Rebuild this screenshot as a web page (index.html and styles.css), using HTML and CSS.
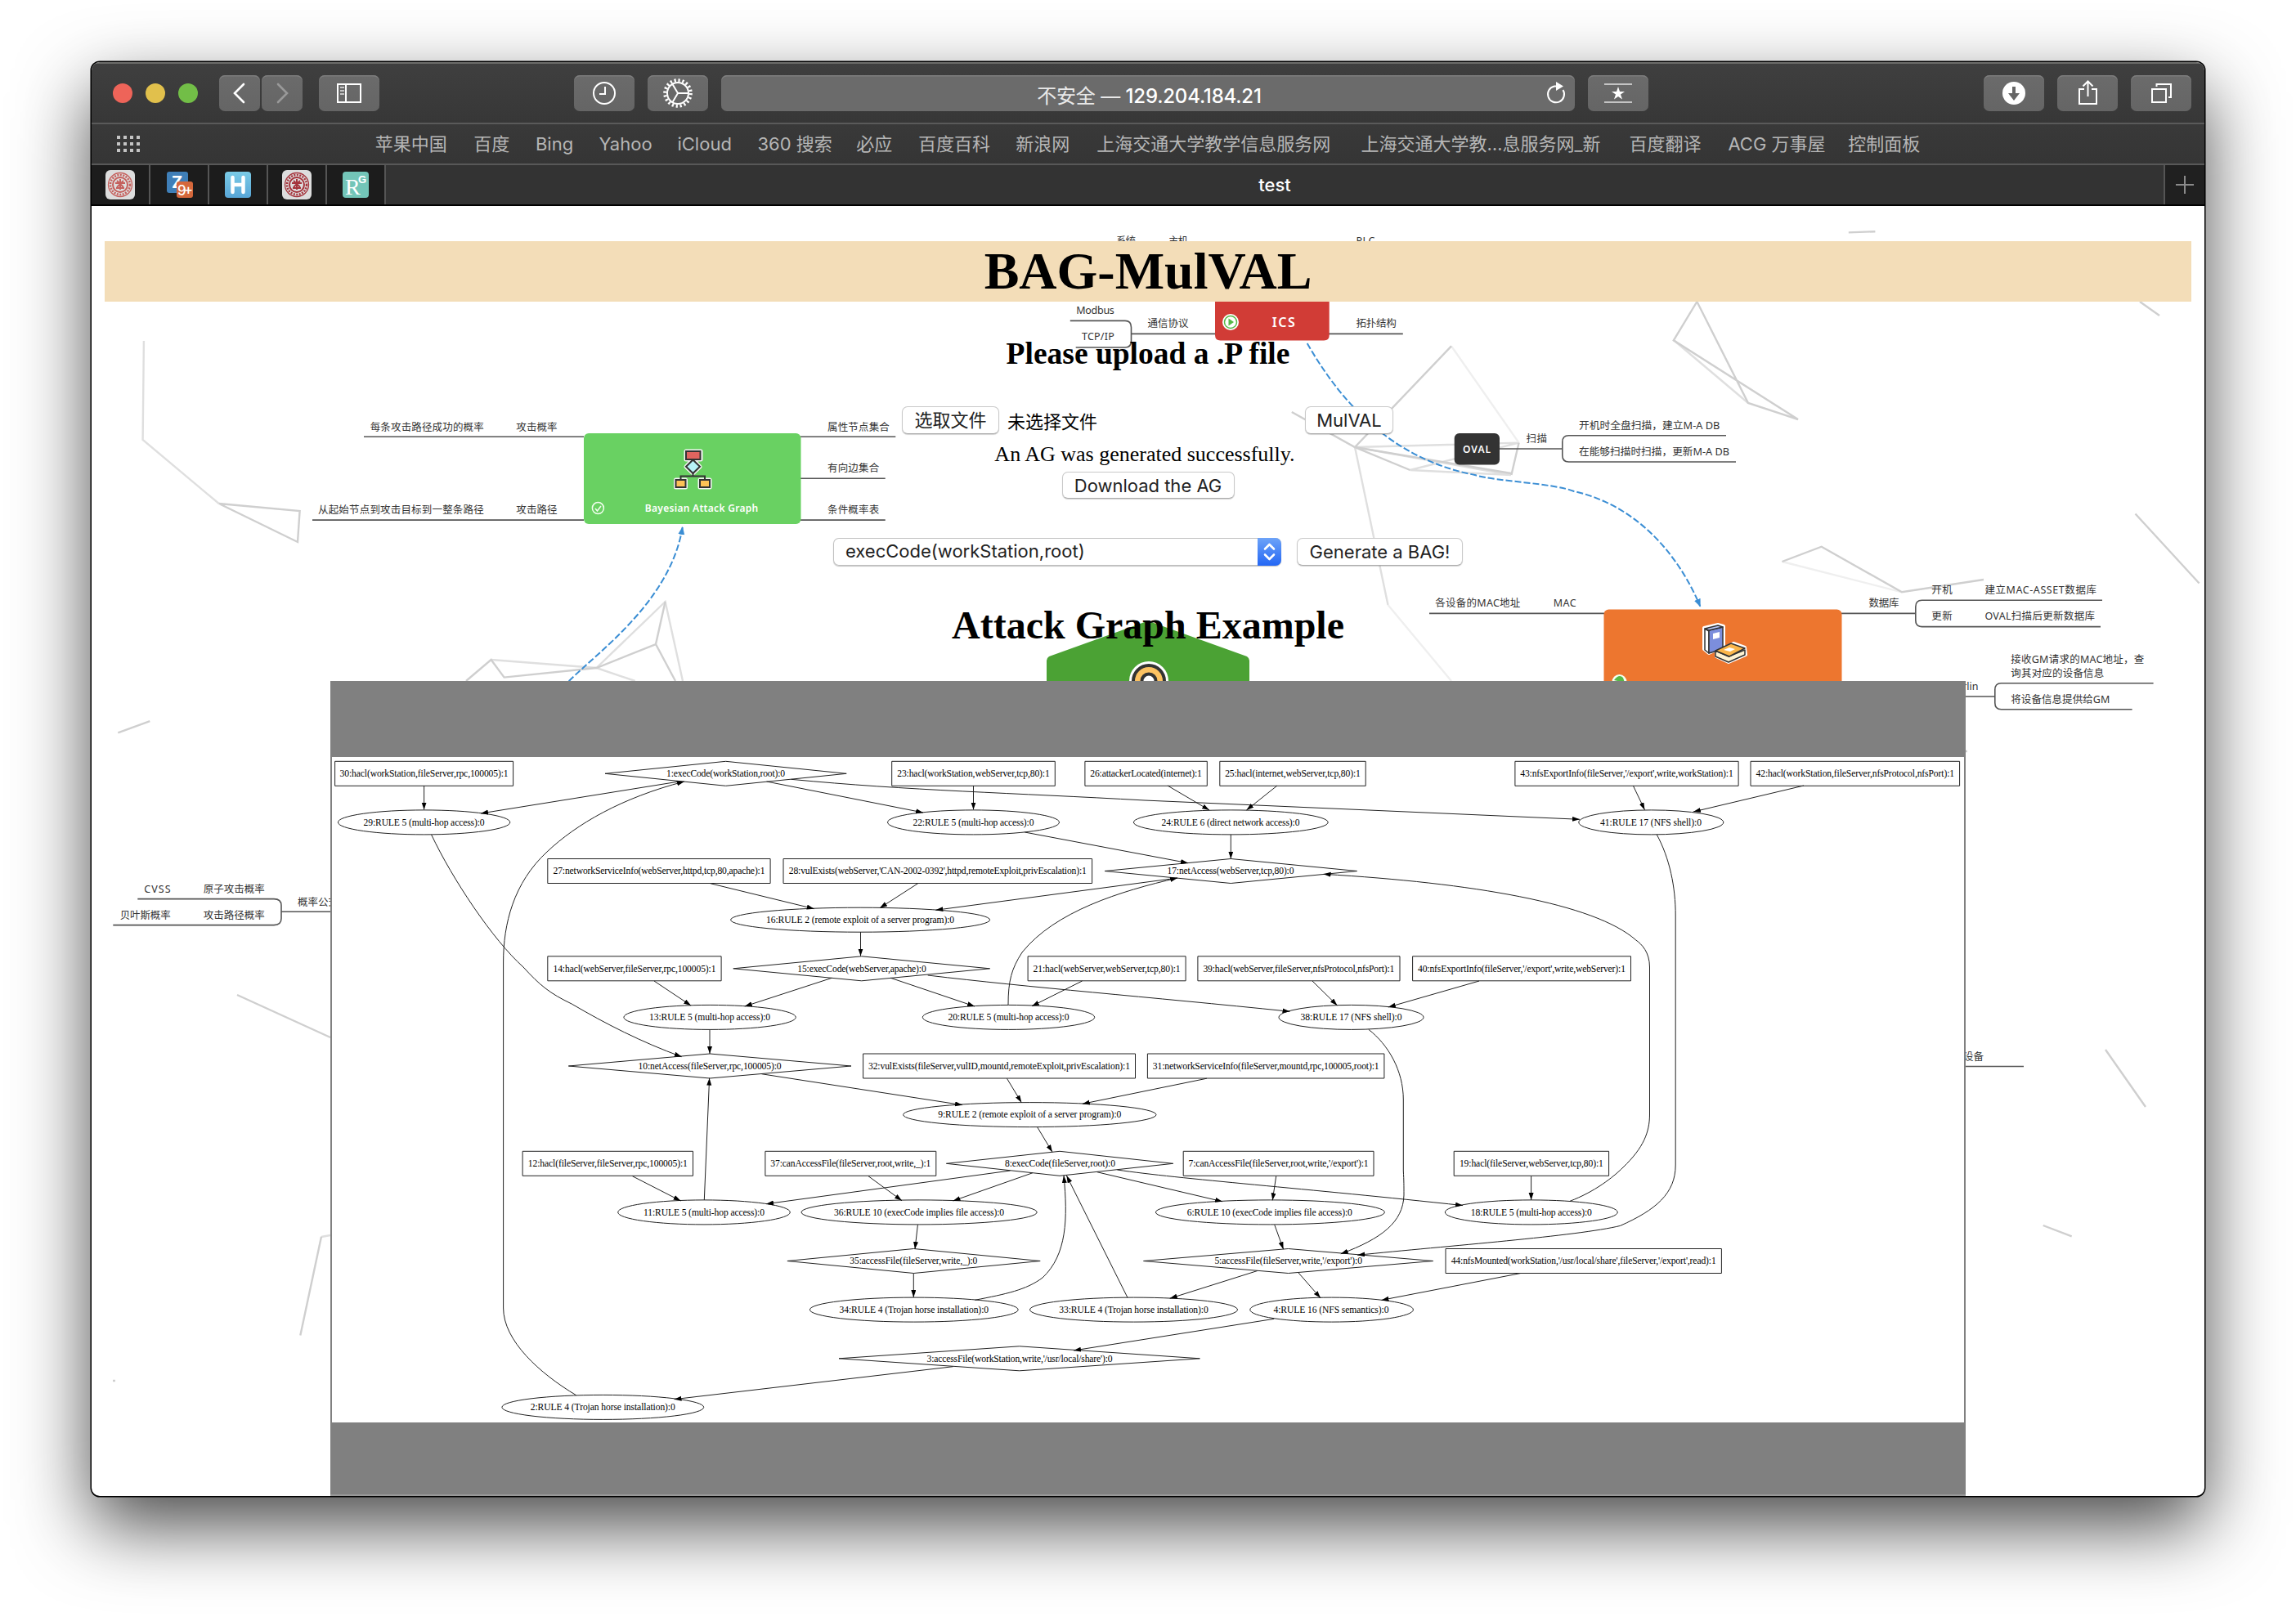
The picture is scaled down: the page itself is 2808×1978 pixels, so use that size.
FILE: index.html
```html
<!DOCTYPE html>
<html lang="zh-CN">
<head>
<meta charset="utf-8">
<title>test</title>
<link rel="stylesheet" href="styles.css">
</head>
<body>
<div class="window">
  <header class="toolbar">
    <div class="lights"><i class="light red"></i><i class="light yellow"></i><i class="light green"></i></div>
    <div class="nav">
      <button class="tool half"><svg width="50" height="44" viewBox="0 0 50 44"><path class="stroke thick" d="M30 11 19 22l11 11"/></svg></button>
      <button class="tool half"><svg width="50" height="44" viewBox="0 0 50 44"><path class="stroke thick dim" d="M20 11l11 11-11 11"/></svg></button>
    </div>
    <button class="tool sidebar"><svg width="74" height="44" viewBox="0 0 74 44"><path class="stroke" d="M23 11h28v22H23zM33 11v22"/><path class="stroke soft" d="M26 15h5M26 19h5M26 23h5"/></svg></button>
    <button class="tool history"><svg width="74" height="44" viewBox="0 0 74 44"><circle class="stroke" cx="37" cy="22" r="13"/><path class="stroke" d="M38 14v9h-7"/></svg></button>
    <button class="tool gear"><svg width="74" height="44" viewBox="0 0 74 44"><circle class="stroke teeth" cx="37" cy="22" r="15.8"/><circle class="stroke" cx="37" cy="22" r="13"/><path class="stroke" d="M37 22h13M37 22l-6.500-11M37 22l-6.500 11"/></svg></button>
    <div class="address"><span class="host">不安全 — <b>129.204.184.21</b></span><svg class="reload" width="30" height="34" viewBox="0 0 30 34"><path class="stroke" d="M23.500 13A10 10 0 1 1 13 8.500h4"/><path class="fill" d="M15 3l9 5.500-9 5.500z"/></svg></div>
    <button class="tool star"><svg width="74" height="44" viewBox="0 0 74 44"><path class="stroke soft" d="M20 11h34M20 33h34"/><path class="fill" d="M37 14l2 6h6l-5 3.500 2 6-5-3.500-5 3.500 2-6-5-3.500h6z"/></svg></button>
    <button class="tool download"><svg width="74" height="44" viewBox="0 0 74 44"><circle class="fill" cx="37" cy="22" r="14"/><path class="arrow" d="M35 14h4v8h5l-7 9-7-9h5z"/></svg></button>
    <button class="tool share"><svg width="74" height="44" viewBox="0 0 74 44"><path class="stroke" d="M33 17h-6v18h21V17h-6M37.500 26V8M31.500 13.500l6-6 6 6"/></svg></button>
    <button class="tool tabsview"><svg width="74" height="44" viewBox="0 0 74 44"><path class="stroke" d="M26 17h17v16H26zM31.500 14v-3H49v16h-3"/></svg></button>
  </header>
  <nav class="favorites">
    <svg class="grid" width="28" height="20" viewBox="0 0 28 20"><path d="M0 2h28M0 10h28M0 18h28"/></svg>
    <div class="links"><span>苹果中国</span><span>百度</span><span>Bing</span><span>Yahoo</span><span>iCloud</span><span>360 搜索</span><span>必应</span><span>百度百科</span><span>新浪网</span><span>上海交通大学教学信息服务网</span><span>上海交通大学教…息服务网_新</span><span>百度翻译</span><span>ACG 万事屋</span><span>控制面板</span></div>
  </nav>
  <div class="tabs">
    <div class="pin"><svg width="36" height="36" viewBox="0 0 36 36"><rect width="36" height="36" rx="6" fill="#ddd"/><g fill="none" stroke="#c5605d"><circle cx="18" cy="18" r="14.500" stroke-width="1.300"/><circle cx="18" cy="18" r="12" stroke-width="2.500" stroke-dasharray="2 1.500"/><circle cx="18" cy="18" r="9" stroke-width="2"/><path stroke-width="2" d="M12 16h12M18 11v13M13 22h10M14 13l8 8M22 13l-8 8"/></g></svg></div>
    <div class="pin"><svg width="36" height="36" viewBox="0 0 36 36"><rect x="3" y="2" width="26" height="26" rx="3" fill="#3f7fb8"/><text class="zed" x="9" y="22">Z</text><rect x="15" y="14" width="20" height="20" rx="3" fill="#d5673b"/><text class="nine" x="16" y="31" textLength="19">9+</text></svg></div>
    <div class="pin"><svg width="36" height="36" viewBox="0 0 36 36"><defs><linearGradient id="sky" x2="0" y2="1"><stop stop-color="#7bcbe6"/><stop offset="1" stop-color="#58a6d8"/></linearGradient></defs><rect x="2" y="2" width="32" height="32" rx="4" fill="url(#sky)"/><path d="M11.500 9v18M24.500 9v18M12 18h12" stroke="#fff" stroke-width="4.500" stroke-linecap="round"/></svg></div>
    <div class="pin"><svg width="36" height="36" viewBox="0 0 36 36"><rect width="36" height="36" rx="6" fill="#ddd"/><g fill="none" stroke="#a5343c"><circle cx="18" cy="18" r="14.500" stroke-width="1.300"/><circle cx="18" cy="18" r="12" stroke-width="2.500" stroke-dasharray="2 1.500"/><circle cx="18" cy="18" r="9" stroke-width="2"/><path stroke-width="2" d="M12 16h12M18 11v13M13 22h10M14 13l8 8M22 13l-8 8"/></g></svg></div>
    <div class="pin"><svg width="36" height="36" viewBox="0 0 36 36"><rect x="2" y="2" width="32" height="32" rx="4" fill="#73c5b8"/><text class="rr" x="5" y="30">R</text><text class="rg" x="21" y="16">G</text></svg></div>
    <div class="tab">test</div>
    <div class="plus"><svg width="22" height="22" viewBox="0 0 22 22"><path d="M0 11h22M11 0v22"/></svg></div>
  </div>

  <main class="page">
    <svg class="map" width="2584" height="1578" viewBox="112 252 2584 1578">
      <defs><marker id="tip" markerUnits="userSpaceOnUse" markerWidth="12" markerHeight="10" refX="9" refY="4" orient="auto"><path d="M0 0L10 4L0 8z" fill="#3b8ed4"/></marker></defs>
      <g class="web">
        <path class="faint" d="M175.900 417L174.600 538L267.700 616M729.500 817L813.600 736L835 833M600.600 807L729.500 817L776.700 833M1657 547L1697.500 740M1657 547L1857.600 541.600M1724.500 575L1857.600 541.600M1724.500 575L1848 581M2046.800 416L2138 493M1657 547L1848 581M393 1513L404 1511"/>
        <path class="fainter" d="M1775 423.400L1857.600 541.600M1697.500 740L1775 833M2179.500 687L2326 724.300"/>
        <path d="M267.700 616L366.600 625L364 663L267.700 616M813.600 736L802 788L729.500 817L616.600 828.600L600.600 807L570 833M802 788L826 833M1775 423.400L1657 547L1724.500 575M1579.800 504L1657 547L1848 579M1857.600 541.600L1848.400 581M2075.400 369L2046.800 416.300L2199 513L2138 493L2075.400 369M2617 369L2641 386M2260.800 284.400L2293.400 283.200M2611.500 628.500L2689.600 713.500M2179.500 687L2227.700 668.700L2326 724.300L2426 709M144.300 896.300L183.300 882.200M290 1217L404 1269M393 1512.700L367.300 1633.600M138 1689h3M2575 1284L2624 1354M2498.700 1499L2533.700 1512.400M2400 919h6"/>
      </g>
      <g class="branch">
        <path d="M445 534.300H714M382 636.100H714M979 534.300H1095.300M979 585.200H1082.700M979 636.100H1082.700M1308.800 392.400H1376q7.500 0 7.500 8V417q0 8-7.500 8H1315.700M1383.500 408.400H1486M1625 408.400H1715.800M1834 549H1910.800M2111 532.800H1918.500q-7.700 0-7.700 8V557q0 8 7.700 8H2123M1748 750.400H1962M2252 750.400H2342.800M2571 734.200H2350.500q-7.700 0-7.700 8V758.600q0 8 7.700 8H2569M2404 852H2439.800M2633.600 835.800H2447.500q-7.700 0-7.700 8V859.800q0 8 7.700 8H2607.600M168.300 1099.600H335q9 0 9 8V1123.600q0 8-9 8H138.300M344 1115.300H404M2404 1304.500H2475"/>
      </g>
      <g class="link">
        <path d="M695.700 833.200C732 797 820 735 834.700 645"/>
        <path d="M1598.700 420C1635 483 1695 560 1803.700 581C1830 589 1900 591 1925 601C2010 620 2058 690 2079.300 741.700"/>
      </g>
      <rect x="714" y="530" width="265.500" height="111" rx="6" fill="#69d162"/>
      <path d="M1486 360H1625.700V410q0 6.500-6.500 6.500H1492.500q-6.500 0-6.500-6.500z" fill="#d13c36"/>
      <rect x="1778.700" y="530" width="55.300" height="38.500" rx="6" fill="#333"/>
      <rect x="1961.500" y="745.500" width="291" height="120" rx="6" fill="#ed762f"/>
      <path d="M1280 900V808q0-3 3-5L1397 762q7-4 14 0L1525 803q3 2 3 5V900z" fill="#4ba234"/>
      <g stroke="#f5f5f5" stroke-width="5" stroke-linejoin="round"><path fill="#f5f5f5" d="M839 552h18v10h-18zM847.500 562L856 571L847.500 579L839 571zM826.500 587h12v9h-12zM856 587h12v9h-12z"/></g>
      <g stroke="#333" stroke-width="2"><path fill="none" d="M847.500 562V583M832.500 587V582.500H862V587"/><path fill="#e0645f" d="M839 552h17.500v10H839z"/><path fill="#b8f2f8" d="M847.500 562.500L856 570.700L847.500 579L839 570.700z"/><path fill="#fcc256" d="M826.500 587h12v9h-12zM856 587h12v9h-12z"/></g>
      <g fill="none" stroke="#f2fff0" stroke-width="1.500"><circle cx="731.400" cy="621.600" r="7"/><path d="M728 622l2.500 3 4.500-6"/></g>
      <circle cx="1505" cy="394" r="10" fill="#fff"/><circle cx="1505" cy="394" r="7.500" fill="#fff" stroke="#56b947" stroke-width="1.500"/><path d="M1502.500 389.500l6.500 4.500-6.500 4.500z" fill="#56b947"/>
      <circle cx="1405" cy="833" r="24" fill="#fff"/><circle cx="1405" cy="833" r="19" fill="#fcc262" stroke="#333" stroke-width="4"/><circle cx="1405" cy="833" r="8.500" fill="#fff" stroke="#333" stroke-width="4"/>
      <circle cx="1980.500" cy="834" r="9" fill="#f4fff0"/><path d="M1974 832q6-8 11-3l2 6z" fill="#56b947"/>
      <g stroke-linejoin="round"><path d="M2084 768l17-4 7 2v27l12-6 14 5 1 9-21 9-15-7v-8l-9 4-6-5z" fill="#fff" stroke="#fff" stroke-width="4"/><path d="M2085 769l5 3v27l-5-4z" fill="#fff" stroke="#333" stroke-width="1.500"/><path d="M2090 771l17-4v27l-17 5z" fill="#7c8edc" stroke="#333" stroke-width="1.500"/><path d="M2085 769l16-4 6 2-17 4z" fill="#b9c6f5" stroke="#333" stroke-width="1.500"/><path d="M2095 775l8-2v7l-8 2z" fill="#fff"/><path d="M2098 796v7l16 7 20-9v-6l-20 8z" fill="#fff3d1" stroke="#333" stroke-width="1.500"/><path d="M2098 796l19-9 17 6-19 10z" fill="#fbb64a" stroke="#333" stroke-width="1.500"/><path d="M2108 795l7-3 7 2-6 3z" fill="#fff"/></g>
      <g class="label">
        <text x="452.700" y="526.500" textLength="139">每条攻击路径成功的概率</text><text x="631.300" y="526.500" textLength="50.300">攻击概率</text>
        <text x="389" y="628.300" textLength="202.700">从起始节点到攻击目标到一整条路径</text><text x="631.300" y="628.300" textLength="50.300">攻击路径</text>
        <text x="1012" y="526.500" textLength="75.800">属性节点集合</text><text x="1012" y="577.400" textLength="63.200">有向边集合</text><text x="1012" y="628.300" textLength="63.200">条件概率表</text>
        <text x="1365" y="298.500" textLength="24">系统</text><text x="1429" y="298.500" textLength="24">主机</text><text x="1658.400" y="298.500" textLength="23">PLC</text>
        <text x="1316.300" y="384" textLength="46.500">Modbus</text><text x="1323" y="416" textLength="39.800">TCP/IP</text><text x="1403.600" y="400" textLength="50">通信协议</text><text x="1658.400" y="400" textLength="49.400">拓扑结构</text>
        <text x="1866.600" y="541.200" textLength="25.400">扫描</text><text x="1931" y="525.400" textLength="172.400" lengthAdjust="spacingAndGlyphs">开机时全盘扫描，建立M-A DB</text><text x="1931" y="557.400" textLength="184" lengthAdjust="spacingAndGlyphs">在能够扫描时扫描，更新M-A DB</text>
        <text x="1755.300" y="741.800" textLength="104">各设备的MAC地址</text><text x="1899.700" y="741.800" textLength="28">MAC</text><text x="2285.600" y="741.800" textLength="37">数据库</text>
        <text x="2362.300" y="725.700" textLength="25.400">开机</text><text x="2427.400" y="725.700" textLength="136.600">建立MAC-ASSET数据库</text><text x="2362.300" y="758" textLength="25.400">更新</text><text x="2427.400" y="758" textLength="134.600">OVAL扫描后更新数据库</text>
        <text x="2459.300" y="810.700" textLength="163">接收GM请求的MAC地址，查</text><text x="2459.300" y="828.100" textLength="114">询其对应的设备信息</text><text x="2459.300" y="860.400" textLength="121">将设备信息提供给GM</text><text x="2400" y="844.200" textLength="19.600">rlin</text>
        <text x="176.300" y="1091.600" textLength="32.400">CVSS</text><text x="146.700" y="1124.300" textLength="62">贝叶斯概率</text><text x="248.700" y="1091.600" textLength="75">原子攻击概率</text><text x="248.700" y="1124.300" textLength="75">攻击路径概率</text><text x="364" y="1108" textLength="50">概率公式</text><text x="2401" y="1297" textLength="25">设备</text>
      </g>
      <g class="label light-label"><text x="788.800" y="626.300" textLength="138.400">Bayesian Attack Graph</text><text x="1789" y="553.600" textLength="34">OVAL</text><text class="big" x="1555.700" y="400" textLength="28">ICS</text></g>
    </svg>

    <h1>BAG-MulVAL</h1>
    <h3>Please upload a .P file</h3>
    <form class="upload"><button type="button" class="btn choose">选取文件</button><span class="nofile">未选择文件</span><button type="button" class="btn run">MulVAL</button></form>
    <p class="status">An AG was generated successfully.</p>
    <button type="button" class="btn get">Download the AG</button>
    <div class="generate"><div class="select"><span>execCode(workStation,root)</span><i><svg width="29" height="34" viewBox="0 0 29 34"><path d="M9 13.500l5.500-5.500 5.500 5.500M9 20.500l5.500 5.500 5.500-5.500"/></svg></i></div><button type="button" class="btn bag">Generate a BAG!</button></div>
    <h2>Attack Graph Example</h2>
    <div class="frame">
      <svg class="graph" width="1996" height="814" viewBox="406 926 1996 814">
        <defs><marker id="head" markerUnits="userSpaceOnUse" markerWidth="10" markerHeight="8" refX="9" refY="3" orient="auto"><path d="M0 0L9 3L0 6z"/></marker></defs>
        <g class="shape">
          <path d="M409.600 931.300h218v30h-218zM1090.700 931.300h199.600v30h-199.600zM1326.900 931.300h149.400v30h-149.400zM1491.800 931.300h178.400v30h-178.400zM1852.900 931.300h273.200v30h-273.200zM2141 931.300h255.600v30H2141z"/>
          <path d="M669.800 1050.500h272.300v30H669.800zM958 1050.500h377.600v30H958zM669.800 1169.800h212.300v30H669.800zM1257.100 1169.800h193v30h-193zM1464.900 1169.800h247.100v30h-247.100zM1727.600 1169.800h266.900v30h-266.900z"/>
          <path d="M1055.600 1289h332.900v30h-332.900zM1403.400 1289h289.500v30h-289.500zM639.100 1408.300h208.400v30H639.100zM935.900 1408.300h208.900v30H935.900zM1447.200 1408.300H1680v30h-232.800zM1778.200 1408.300h189.400v30h-189.400zM1768 1527.500h337.400v30H1768z"/>
          <path d="M740 946.300l147.600-15 147.600 15-147.600 15zM1351 1065.500l154.300-15 154.300 15-154.300 15zM896.800 1184.800l156.900-15 156.900 15-156.900 15zM695.300 1304l172.800-15 172.900 15-172.900 15zM1157.400 1423.300l138.600-15 138.700 15-138.700 15zM962.900 1542.500l154.600-15 154.700 15-154.700 15zM1398.500 1542.500l177.100-15 177.100 15-177.100 15zM1026 1661.800l220.700-15 220.700 15-220.700 15z"/>
          <ellipse cx="518.600" cy="1005.900" rx="105.200" ry="15"/><ellipse cx="1190.500" cy="1005.900" rx="105" ry="15"/><ellipse cx="1505.300" cy="1005.900" rx="118.900" ry="15"/><ellipse cx="2019.300" cy="1005.900" rx="88.500" ry="15"/>
          <ellipse cx="1052.100" cy="1125.200" rx="158.500" ry="15"/><ellipse cx="868.100" cy="1244.400" rx="105.200" ry="15"/><ellipse cx="1233.500" cy="1244.400" rx="105.200" ry="15"/><ellipse cx="1652.500" cy="1244.400" rx="88.500" ry="15"/>
          <ellipse cx="1259.300" cy="1363.600" rx="154.700" ry="15"/><ellipse cx="861" cy="1482.900" rx="105.300" ry="15"/><ellipse cx="1124.100" cy="1482.900" rx="144.100" ry="15"/><ellipse cx="1553.400" cy="1482.900" rx="140" ry="15"/><ellipse cx="1872.800" cy="1482.900" rx="105.500" ry="15"/>
          <ellipse cx="1117.800" cy="1602.100" rx="127.400" ry="15"/><ellipse cx="1386.500" cy="1602.100" rx="127" ry="15"/><ellipse cx="1628.600" cy="1602.100" rx="99.800" ry="15"/><ellipse cx="737.300" cy="1721.400" rx="123.400" ry="15"/>
        </g>
        <g class="edge">
          <path d="M518.600 961V990.500"/><path d="M830.500 956L588 995"/><path d="M937.600 956L1129 994"/><path d="M967.600 953.300C1110 967 1240 970 1400 979L1932 1002.300"/>
          <path d="M704.600 1706.700C660 1680 615.600 1640 615.600 1600V1177C615.600 1130 628 1080 669 1042C705 1008 760 976 836.900 956"/>
          <path d="M1190.500 961V990.500"/><path d="M1428 961L1479 991"/><path d="M1562 961L1524.400 991"/><path d="M1997.300 961L2011.500 990.700"/><path d="M2206 961L2071 993"/><path d="M1505.300 1020.700V1050.500"/><path d="M1253.300 1018L1453 1055.700"/>
          <path d="M527.600 1021C553 1075 603 1150 640 1183C660 1205 672 1215 699.700 1228.300C740 1252 785 1275 833.700 1292.700"/>
          <path d="M868.800 1080.700L995.700 1111.700"/><path d="M1122.600 1080.700L1076 1110.700"/><path d="M1440 1074L1144.300 1113.300"/><path d="M1233 1229.300C1233 1200 1237 1185 1250 1165C1290 1115 1370 1090 1440 1074"/>
          <path d="M1052.500 1140V1169.500"/><path d="M1017.300 1196.300L910.800 1231"/><path d="M1089.400 1196.300L1192 1231"/><path d="M1134.700 1193C1260 1208 1400 1219 1577.500 1237.300"/><path d="M800 1200L845 1230"/><path d="M1323.500 1200L1262 1230.700"/><path d="M1605 1200L1635.500 1230"/><path d="M1809 1200L1697.800 1232"/><path d="M868 1259.500V1289"/>
          <path d="M1673.800 1259.300C1698 1278 1716.300 1310 1716.300 1345V1432C1717 1445 1717 1450 1717 1462C1716 1495 1690 1515 1639.800 1533.800"/>
          <path d="M931.300 1313.700L1177 1351.700"/><path d="M1231.500 1319.300L1249.300 1348.700"/><path d="M1475.900 1319.200L1323.900 1350.300"/><path d="M1268.800 1379L1287 1409.300"/><path d="M861.300 1468L867.600 1318.700"/><path d="M773.400 1438.700L832.600 1469"/><path d="M1235.500 1432L937 1472.700"/><path d="M1062 1438.700L1103 1468.700"/><path d="M1263 1434.700L1165.500 1469"/><path d="M1341.700 1433.700L1495 1469.800"/><path d="M1366.400 1431C1440 1442 1600 1454 1789 1474.600"/><path d="M1560.700 1438.700L1556.300 1468.300"/><path d="M1872.600 1438.700V1468"/>
          <path d="M1919.800 1469.400C1950 1458 1973 1440 1985 1428C2010 1404 2017.500 1385 2017.500 1363V1183C2017.500 1165 2008 1155 2000.800 1150C1950 1105 1800 1080 1618.600 1069.300"/>
          <path d="M2026.300 1021C2042 1050 2049.200 1085 2049.200 1120V1425C2049.200 1460 2025 1480 1981.600 1499.400C1930 1512 1770 1524 1660.200 1535.300"/>
          <path d="M1122.400 1498.300L1119 1528"/><path d="M1117.300 1557.700V1587"/><path d="M1192.400 1590.300C1230 1583 1255 1578 1275 1563C1305 1535 1306 1490 1301 1438"/><path d="M1379 1587.300L1304.400 1438"/><path d="M1558.800 1498.300L1569.600 1528.200"/><path d="M1537.800 1554.500L1430.700 1588.300"/><path d="M1588.100 1557L1615 1587.800"/><path d="M1859.800 1557.500L1689.500 1590.400"/><path d="M1558.200 1613.300L1313 1652"/><path d="M1165.500 1671.700L824.500 1711.700"/>
        </g>
        <g class="name">
          <text x="518.600" y="950" textLength="206">30:hacl(workStation,fileServer,rpc,100005):1</text><text x="887.600" y="950" textLength="145">1:execCode(workStation,root):0</text><text x="1190.500" y="950" textLength="186.500">23:hacl(workStation,webServer,tcp,80):1</text><text x="1401.600" y="950" textLength="136.600">26:attackerLocated(internet):1</text><text x="1581" y="950" textLength="165.700">25:hacl(internet,webServer,tcp,80):1</text><text x="1989.500" y="950" textLength="260.500">43:nfsExportInfo(fileServer,'/export',write,workStation):1</text><text x="2268.800" y="950" textLength="242.500">42:hacl(workStation,fileServer,nfsProtocol,nfsPort):1</text>
          <text x="518.600" y="1009.600" textLength="148">29:RULE 5 (multi-hop access):0</text><text x="1190.500" y="1009.600" textLength="148">22:RULE 5 (multi-hop access):0</text><text x="1505" y="1009.600" textLength="169">24:RULE 6 (direct network access):0</text><text x="2019" y="1009.600" textLength="124">41:RULE 17 (NFS shell):0</text>
          <text x="806" y="1069.200" textLength="259">27:networkServiceInfo(webServer,httpd,tcp,80,apache):1</text><text x="1146.800" y="1069.200" textLength="364">28:vulExists(webServer,'CAN-2002-0392',httpd,remoteExploit,privEscalation):1</text><text x="1505" y="1069.200" textLength="155">17:netAccess(webServer,tcp,80):0</text>
          <text x="1052.100" y="1128.900" textLength="230">16:RULE 2 (remote exploit of a server program):0</text>
          <text x="776" y="1188.500" textLength="199">14:hacl(webServer,fileServer,rpc,100005):1</text><text x="1054" y="1188.500" textLength="157.500">15:execCode(webServer,apache):0</text><text x="1353.600" y="1188.500" textLength="180">21:hacl(webServer,webServer,tcp,80):1</text><text x="1588.400" y="1188.500" textLength="234">39:hacl(webServer,fileServer,nfsProtocol,nfsPort):1</text><text x="1861" y="1188.500" textLength="254">40:nfsExportInfo(fileServer,'/export',write,webServer):1</text>
          <text x="868.100" y="1248.100" textLength="148">13:RULE 5 (multi-hop access):0</text><text x="1233.500" y="1248.100" textLength="148">20:RULE 5 (multi-hop access):0</text><text x="1652.500" y="1248.100" textLength="124">38:RULE 17 (NFS shell):0</text>
          <text x="868.100" y="1307.700" textLength="175">10:netAccess(fileServer,rpc,100005):0</text><text x="1222" y="1307.700" textLength="320">32:vulExists(fileServer,vulID,mountd,remoteExploit,privEscalation):1</text><text x="1548.200" y="1307.700" textLength="276.700">31:networkServiceInfo(fileServer,mountd,rpc,100005,root):1</text>
          <text x="1259.300" y="1367.300" textLength="224">9:RULE 2 (remote exploit of a server program):0</text>
          <text x="743.300" y="1427" textLength="195">12:hacl(fileServer,fileServer,rpc,100005):1</text><text x="1040.300" y="1427" textLength="196">37:canAccessFile(fileServer,root,write,_):1</text><text x="1296.500" y="1427" textLength="135">8:execCode(fileServer,root):0</text><text x="1563.600" y="1427" textLength="220">7:canAccessFile(fileServer,root,write,'/export'):1</text><text x="1872.900" y="1427" textLength="176">19:hacl(fileServer,webServer,tcp,80):1</text>
          <text x="861" y="1486.600" textLength="148">11:RULE 5 (multi-hop access):0</text><text x="1124.100" y="1486.600" textLength="208">36:RULE 10 (execCode implies file access):0</text><text x="1552.800" y="1486.600" textLength="202">6:RULE 10 (execCode implies file access):0</text><text x="1872.800" y="1486.600" textLength="148">18:RULE 5 (multi-hop access):0</text>
          <text x="1117.300" y="1546.200" textLength="156">35:accessFile(fileServer,write,_):0</text><text x="1575.700" y="1546.200" textLength="180.500">5:accessFile(fileServer,write,'/export'):0</text><text x="1936.700" y="1546.200" textLength="324">44:nfsMounted(workStation,'/usr/local/share',fileServer,'/export',read):1</text>
          <text x="1117.800" y="1605.800" textLength="182.500">34:RULE 4 (Trojan horse installation):0</text><text x="1386.500" y="1605.800" textLength="182.500">33:RULE 4 (Trojan horse installation):0</text><text x="1628" y="1605.800" textLength="141">4:RULE 16 (NFS semantics):0</text>
          <text x="1247" y="1665.500" textLength="227">3:accessFile(workStation,write,'/usr/local/share'):0</text><text x="737.300" y="1725" textLength="177">2:RULE 4 (Trojan horse installation):0</text>
        </g>
      </svg>
    </div>
  </main>
</div>
</body>
</html>
```
FILE: styles.css
```css
* { box-sizing: border-box; }
html, body { margin: 0; background: #fff; }
body { width: 2808px; height: 1978px; overflow: hidden; display: flow-root; font-family: Inter, "Noto Sans CJK SC", sans-serif; }
svg { display: block; }
button { font: inherit; border: 0; padding: 0; margin: 0; }

.window { width: 2584px; height: 1754px; margin: 76px 0 0 112px; border-radius: 10px; overflow: hidden; background: #fff; box-shadow: 0 0 0 1.5px #000, 0 36px 90px rgba(0, 0, 0, .72); }

.toolbar { display: flex; align-items: center; height: 76px; padding: 0 16px 0 26px; background: linear-gradient(#3f3f3f, #373737); border-top: 2px solid #6c6c6a; border-bottom: 2px solid #5a5a5a; }
.lights { display: flex; gap: 16px; }
.light { width: 24px; height: 24px; border-radius: 50%; }
.light.red { background: #ee6459; }
.light.yellow { background: #e1c04c; }
.light.green { background: #72be47; }
.nav { display: flex; gap: 2px; margin-left: 26px; }
.tool { width: 74px; height: 44px; border-radius: 7px; background: linear-gradient(#6b6b6b, #656565); box-shadow: inset 0 1.5px #7d7d7d; }
.tool.half { width: 50px; }
.sidebar { margin-left: 20px; }
.history { margin-left: 238px; }
.gear, .address, .star, .share, .tabsview { margin-left: 16px; }
.download { margin-left: 410px; }
.address { position: relative; display: flex; align-items: center; justify-content: center; width: 1044px; height: 44px; border-radius: 7px; background: #6b6b6b; box-shadow: inset 0 1.5px #808080; color: #e8e8e8; font-size: 24px; letter-spacing: -.2px; }
.address b { font-weight: 500; color: #fff; }
.host { padding: 2px 0 0 3px; }
.reload { position: absolute; right: 8px; top: 5px; }
.stroke { fill: none; stroke: #fff; stroke-width: 2; }
.stroke.thick { stroke-width: 2.6; stroke-linecap: round; }
.stroke.dim { stroke: #999; }
.stroke.soft { stroke: #c4c4c4; }
.stroke.teeth { stroke-width: 4; stroke-dasharray: 2.2 2.764; }
.fill { fill: #fff; }
.arrow { fill: #666; }

.favorites { display: flex; align-items: center; height: 50px; background: linear-gradient(#393939, #353535); border-bottom: 2px solid #585858; padding-left: 31px; }
.grid { fill: none; stroke: #c4c4c4; stroke-width: 4; stroke-dasharray: 4 4; }
.links { display: grid; grid-template-columns: 120.6px 75.7px 77.5px 96px 98px 120.8px 75.700px 119.300px 98.900px 323.400px 327.900px 121px 146.900px 100px; margin-left: 287.700px; font-size: 22px; line-height: 30px; color: #b6b6b6; white-space: nowrap; }

.tabs { display: flex; height: 50px; background: #333; border-bottom: 2px solid #000; }
.pin { width: 72px; padding: 6px 0 0 17px; background: #1c1c1c; border-right: 2px solid #555; }
.pin:first-child { width: 72px; }
.tab { flex: 1; display: flex; align-items: center; justify-content: center; color: #fff; font-size: 22px; font-weight: 500; }
.plus { width: 50px; border-left: 2px solid #555; background: #202020; display: flex; align-items: center; justify-content: center; }
.plus path { stroke: #8a8a8a; stroke-width: 2; }
.zed { font: bold 20px Inter, sans-serif; fill: #fff; }
.nine { font: 500 17px Inter, sans-serif; fill: #fff; }
.rr { font: 28px "Liberation Serif", serif; fill: #fff; }
.rg { font: bold 13px "Liberation Sans", sans-serif; fill: #fff; }

.page { position: relative; height: 1578px; display: flex; flex-direction: column; align-items: center; font-family: "Liberation Serif", serif; color: #000; }
.page > * { position: relative; flex: none; }
.page > .map { position: absolute; left: 0; top: 0; }
h1, h2, h3, p { margin: 0; white-space: nowrap; }
h1 { align-self: stretch; margin: 43px 16px 0; height: 74px; line-height: 74px; font-size: 64px; text-align: center; background: #f3ddb8; }
h3 { margin-top: 42px; height: 44px; line-height: 44px; font-size: 37.5px; }
.upload { display: flex; align-items: center; width: 601px; height: 34px; margin-top: 42px; margin-left: -1px; }
.nofile { margin-left: 10px; font: 22px Inter, "Noto Sans CJK SC", sans-serif; }
.btn { height: 34px; border-radius: 7px; background: #fff; border: 1px solid #c9c9c9; border-bottom-color: #ababab; box-shadow: 0 1px 1px rgba(0, 0, 0, .18); color: #222; font: 22px/30px Inter, "Noto Sans CJK SC", sans-serif; white-space: nowrap; }
.choose { width: 119px; }
.run { width: 108px; margin-left: auto; }
.status { margin-top: 10px; height: 30px; font-size: 26px; line-height: 30px; padding-right: 8px; }
.get { width: 211px; height: 33px; margin-top: 6px; }
.generate { display: flex; justify-content: space-between; width: 770px; height: 34px; margin-top: 48px; }
.select { display: flex; justify-content: space-between; width: 548px; height: 34px; border-radius: 7px; overflow: hidden; background: #fff; box-shadow: inset 0 0 0 1px #c0c0c0, 0 1px 1px rgba(0, 0, 0, .25); padding-left: 15px; color: #222; font: 22px/33px Inter, sans-serif; }
.select i { width: 29px; background: linear-gradient(#6da3f8, #2467f4); }
.select path { fill: none; stroke: #fff; stroke-width: 2.6; stroke-linecap: round; stroke-linejoin: round; }
.bag { width: 203px; }
h2 { margin-top: 45px; height: 55px; line-height: 55px; font-size: 48px; }
.frame { width: 2000px; height: 997px; margin-top: 41px; padding: 93px 2px 0; background: #808080; border-bottom: 2px solid #999; }
.graph { background: #fff; }

.web path { fill: none; stroke: #cfcfcf; stroke-width: 2.4; }
.web .faint { stroke: #dfdfdf; }
.web .fainter { stroke: #efefef; }
.branch path { fill: none; stroke: #555; stroke-width: 1.6; }
.link path { fill: none; stroke: #3b8ed4; stroke-width: 2; stroke-dasharray: 8 3; marker-end: url(#tip); }
.label { font: 12.500px "Noto Sans", "Noto Sans CJK SC", sans-serif; fill: #333; }
.light-label { font-weight: 600; fill: #fff; font-size: 12px; }
.light-label .big { font-size: 16px; }
.shape * { fill: none; stroke: #222; stroke-width: 1; }
.edge path { fill: none; stroke: #222; stroke-width: 1; marker-end: url(#head); }
#head path { fill: #000; stroke: none; }
.name { font: 11.600px "Liberation Serif", serif; text-anchor: middle; }
```
